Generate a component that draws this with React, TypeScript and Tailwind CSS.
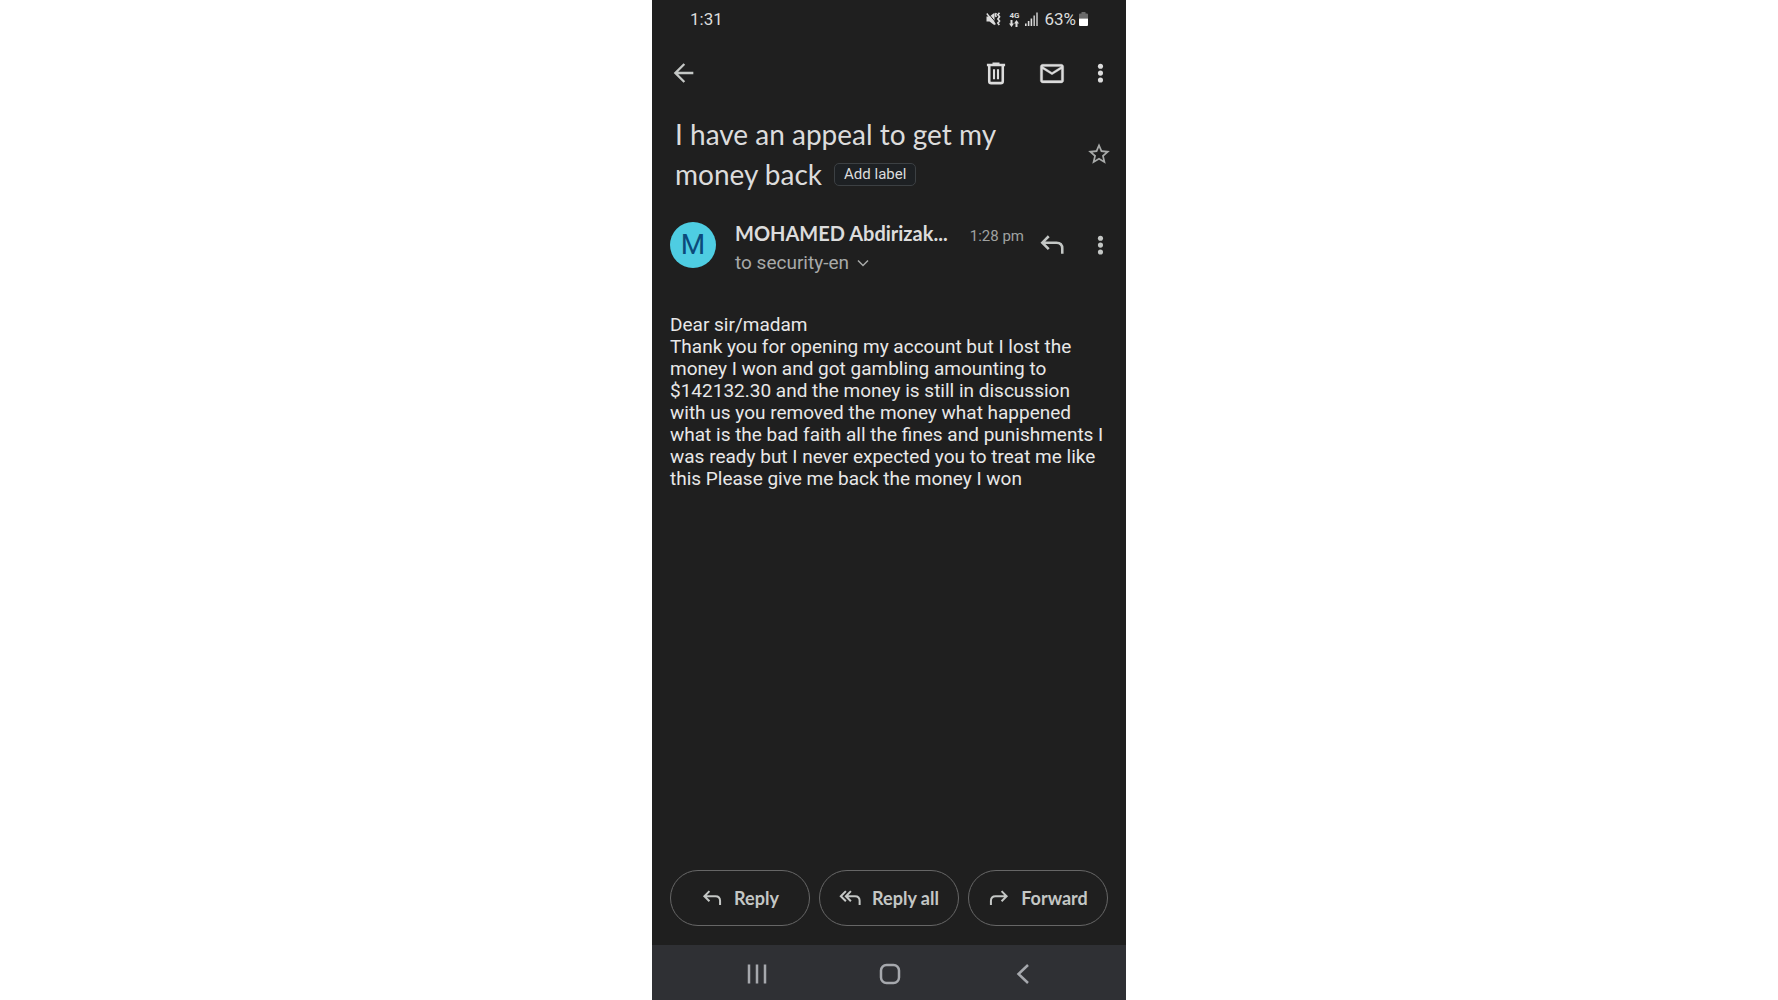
import type { ReactNode } from 'react';

const message =
  'Thank you for opening my account but I lost the money I won and got gambling amounting to $142132.30 and the money is still in discussion with us you removed the money what happened what is the bad faith all the fines and punishments I was ready but I never expected you to treat me like this Please give me back the money I won';

function IconButton({ label, className = '', children }: { label: string; className?: string; children: ReactNode }) {
  return (
    <button type="button" aria-label={label} className={`flex size-7 shrink-0 items-center justify-center ${className}`}>
      {children}
    </button>
  );
}

function MoreIcon() {
  return (
    <svg viewBox="0 0 24 24" className="size-7" fill="currentColor">
      <circle cx="12.4" cy="6.2" r="2.2" />
      <circle cx="12.4" cy="12.1" r="2.2" />
      <circle cx="12.4" cy="18" r="2.2" />
    </svg>
  );
}

function ReplyIcon({ className }: { className: string }) {
  return (
    <svg viewBox="0 0 24 24" className={className} fill="none" stroke="currentColor" strokeWidth="2.2">
      <path d="M9.200 4.500 3.700 10l5.500 5.500M3.700 10H15.800Q20.800 10 20.800 15V19.500" />
    </svg>
  );
}

function ReplyAllIcon({ className }: { className: string }) {
  return (
    <svg viewBox="0 0 24 24" className={className} fill="none" stroke="currentColor" strokeWidth="2.2">
      <path d="M7.500 4.500 2 10l5.500 5.500M13 4.500 7.500 10l5.500 5.500M7.500 10H17.500Q22.500 10 22.500 15V19.500" />
    </svg>
  );
}

function StatusIcons() {
  return (
    <div className="flex items-center">
      <svg viewBox="0 0 15 14" className="mr-[7px] h-3.5 w-[15px]" fill="currentColor">
        <path d="M0.500 4.500h3L8.500 0.800v12.400L3.500 9.500h-3z" />
        <path d="M0.800 2 9.500 12.500" stroke="#1f1f1f" strokeWidth="1" transform="translate(1 -1.200)" />
        <path d="M0.800 1.500 9.300 12.500" stroke="currentColor" strokeWidth="1.400" />
        <path d="M10.200 1l-.8 2 .8 2M13.500 0.800l-1.600 2 1.600 2-1.600 2.200 1.600 2-1.600 2 1.400 2" fill="none" stroke="currentColor" strokeWidth="1.700" />
      </svg>
      <span className="mr-[5px] flex w-3 flex-col items-center">
        <span className="font-['Roboto'] text-[8px] leading-[8px] font-bold">4G</span>
        <svg viewBox="0 0 10 7" className="h-[7px] w-2.5" fill="currentColor">
          <path d="M1.500 0h2v3.500H5L2.500 7 0 3.500h1.500zM6.500 7h2V3.500H10L7.500 0 5 3.500h1.500z" />
        </svg>
      </span>
      <svg viewBox="0 0 13 14" className="mr-1.5 h-3.5 w-[13px]" fill="currentColor">
        <path d="M0 11.500h1.600V14H0zM2.800 9h1.600v5H2.800zM5.600 6.500h1.600V14H5.600z" />
        <path d="M8.400 3.500H10V14H8.400zM11.200 0.500h1.600V14h-1.600z" opacity=".85" />
      </svg>
      <span className="text-[17px] leading-5">63%</span>
      <svg viewBox="0 0 9 14" className="ml-[3px] h-3.5 w-[9px]" fill="currentColor">
        <path d="M2.500 0h4v1.500H8q1 0 1 1V6.500H0V2.500q0-1 1-1h1.500z" opacity=".4" />
        <path d="M0 6.500h9V13q0 1-1 1H1q-1 0-1-1z" fill="#fff" />
      </svg>
    </div>
  );
}

function ActionButton({ icon, children }: { icon: ReactNode; children: ReactNode }) {
  return (
    <button
      type="button"
      className="flex h-14 flex-1 items-center justify-center gap-[11px] rounded-full border border-[#666666] text-[18px] font-bold text-[#c4c7c5]"
    >
      {icon}
      <span>{children}</span>
    </button>
  );
}

export default function App() {
  return (
    <div className="min-h-screen bg-white">
      <div className="mx-auto flex min-h-screen w-full max-w-[474px] flex-col bg-[#1f1f1f] font-['Lato',sans-serif] text-[#dcdcdc]">
        <header>
          <div className="flex h-[38px] items-center justify-between px-[38px] font-['Roboto',sans-serif]">
            <span className="text-[17px] leading-5">1:31</span>
            <StatusIcons />
          </div>
          <nav className="flex h-[70px] items-center pr-3 pl-[18px]" aria-label="Message actions">
            <IconButton label="Back" className="mr-auto text-[#c4c7c5]">
              <svg viewBox="0 0 24 24" className="size-7" fill="none" stroke="currentColor" strokeWidth="2">
                <path d="M20 12H5M12.300 4.300 4.600 12l7.700 7.700" />
              </svg>
            </IconButton>
            <IconButton label="Delete" className="mr-7">
              <svg viewBox="0 0 24 24" className="size-7" fill="none" stroke="currentColor" strokeWidth="2.2">
                <path d="M4.200 5.200h15.600M9 4.200h6" />
                <path d="M6.200 5v14q0 1.700 1.700 1.700h8.200q1.700 0 1.700-1.700V5" />
                <path d="M10.300 8.700v8.600M13.700 8.700v8.600" strokeWidth="1.800" />
              </svg>
            </IconButton>
            <IconButton label="Mark as unread" className="mr-5">
              <svg viewBox="0 0 24 24" className="size-7" fill="currentColor" stroke="currentColor" strokeWidth=".3">
                <path d="M22 6.500c0-1.100-.9-2-2-2H4c-1.100 0-2 .9-2 2v12c0 1.100.9 2 2 2h16c1.100 0 2-.9 2-2V6.500zm-2 0-8 5-8-5h16zm0 12H4V8.500l8 5 8-5v10z" />
              </svg>
            </IconButton>
            <IconButton label="More options">
              <MoreIcon />
            </IconButton>
          </nav>
        </header>

        <main className="flex flex-1 flex-col">
          <div className="flex items-center justify-between pt-1.5 pr-[13px] pl-[23px]">
            <div className="text-[28px] leading-10">
              <h1 className="contents">
                <span className="block">I have an appeal to get my</span>
                <span className="float-left mr-3">money back</span>
              </h1>
              <div className="flex h-10 items-center">
                <button
                  type="button"
                  className="flex h-[23px] items-center rounded-[5px] border border-[#3c4043] bg-[#1d2023] px-[9px] font-['Roboto',sans-serif] text-[15px] leading-5"
                >
                  Add label
                </button>
              </div>
            </div>
            <IconButton label="Star" className="text-[#a8aaa9]">
              <svg viewBox="0 0 24 24" className="size-[26px]" fill="currentColor">
                <path d="m22 9.240-7.190-.62L12 2 9.190 8.630 2 9.240l5.460 4.730L5.820 21 12 17.270 18.180 21l-1.630-7.030L22 9.240zM12 15.400l-3.760 2.270 1-4.280-3.320-2.880 4.380-.38L12 6.100l1.710 4.040 4.380.38-3.320 2.880 1 4.280L12 15.400z" />
              </svg>
            </IconButton>
          </div>

          <section className="mt-[21px] flex items-center pr-3 pl-[18px]" aria-label="Sender">
            <span className="mr-[19px] flex size-[46px] shrink-0 items-center justify-center rounded-full bg-[#4ecde2] font-['Roboto',sans-serif] text-[28px] leading-8 text-[#0b4a7b]">
              M
            </span>
            <div className="min-w-0 flex-1">
              <div className="flex items-baseline justify-between">
                <span className="truncate text-[20px] leading-9 font-bold">MOHAMED Abdirizak...</span>
                <time className="shrink-0 font-['Roboto',sans-serif] text-[15px] leading-5 text-[#a0a2a1]">1:28 pm</time>
              </div>
              <button
                type="button"
                className="flex items-center gap-2 font-['Roboto',sans-serif] text-[19px] leading-6 text-[#a8aaa9]"
              >
                <span>to security-en</span>
                <svg viewBox="0 0 12 12" className="size-3" fill="none" stroke="currentColor" strokeWidth="1.500">
                  <path d="m1 3.500 5 5 5-5" />
                </svg>
              </button>
            </div>
            <IconButton label="Reply" className="mr-5 ml-3.5 text-[#c4c7c5]">
              <ReplyIcon className="size-7" />
            </IconButton>
            <IconButton label="More message options" className="text-[#c4c7c5]">
              <MoreIcon />
            </IconButton>
          </section>

          <article className="mt-[39px] px-[18px] font-['Roboto',sans-serif] text-[19px] leading-[22px] text-[#e8e8e8]">
            <p>Dear sir/madam</p>
            <p>{message}</p>
          </article>

          <div className="mt-auto flex gap-[9px] px-[18px] pt-6 pb-[19px]">
            <ActionButton icon={<ReplyIcon className="size-[22px]" />}>Reply</ActionButton>
            <ActionButton icon={<ReplyAllIcon className="size-[22px]" />}>Reply all</ActionButton>
            <ActionButton icon={<ReplyIcon className="size-[22px] -scale-x-100" />}>Forward</ActionButton>
          </div>
        </main>

        <footer className="flex h-[55px] items-center justify-center gap-[105px] bg-[#2f3034] pt-0.5 pl-0.5 text-[#a6a8ad]">
          <IconButton label="Recent apps">
            <svg viewBox="0 0 28 28" className="size-7" fill="none" stroke="currentColor" strokeWidth="2.500">
              <path d="M6 4.500v19M14 4.500v19M22 4.500v19" />
            </svg>
          </IconButton>
          <IconButton label="Home">
            <svg viewBox="0 0 28 28" className="size-7" fill="none" stroke="currentColor" strokeWidth="2.500">
              <rect x="5" y="5" width="18" height="18" rx="5.500" />
            </svg>
          </IconButton>
          <IconButton label="System back">
            <svg viewBox="0 0 28 28" className="size-7" fill="none" stroke="currentColor" strokeWidth="2.500">
              <path d="M19 5 9.500 14l9.500 9" />
            </svg>
          </IconButton>
        </footer>
      </div>
    </div>
  );
}
